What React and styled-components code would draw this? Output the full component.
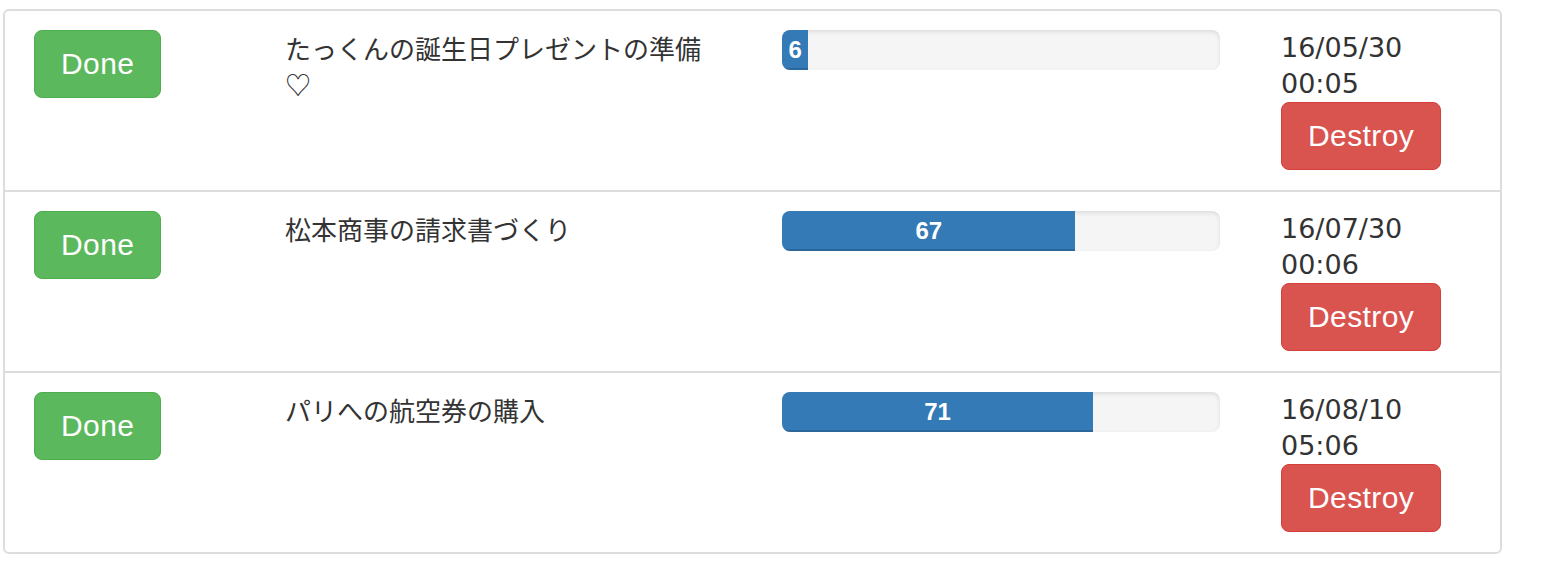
import React from "react";
import styled, { createGlobalStyle } from "styled-components";

const GlobalStyle = createGlobalStyle`
    body {
        margin:0;
        background:#fff;
        color:#333;
        font-family:"Liberation Sans", Arial, sans-serif;
    }
    * { box-sizing:border-box; }
`;

const Panel = styled.div`
    margin:9px 0 0 3px;
    width:1499px;
    border:2px solid #ddd;
    border-radius:6px;
`;

const Row = styled.div`
    display:grid;
    grid-template-columns: 251px 497px 499px 1fr;
    align-items:start;
    padding:19px 0 20px 29px;
    & + & {
        border-top:2px solid #ddd;
    }
`;

const Button = styled.button`
    display:inline-flex;
    align-items:center;
    justify-content:center;
    height:68px;
    padding:0 26px;
    border:1px solid ${p => p.$danger ? "#d43f3a" : "#4cae4c"};
    background:${p => p.$danger ? "#d9534f" : "#5cb85c"};
    color:#fff;
    border-radius:8px;
    font-family:"Liberation Sans", Arial, sans-serif;
    font-size:30px;
    letter-spacing:0.4px;
    cursor:pointer;
`;

const Title = styled.div`
    max-width:430px;
    font-family:"Noto Sans CJK JP", sans-serif;
    font-size:26px;
    line-height:36px;
    color:#333;
`;

const Progress = styled.div`
    width:438px;
    height:40px;
    background:#f5f5f5;
    border-radius:8px;
    overflow:hidden;
    box-shadow: inset 0 2px 4px rgba(0,0,0,0.1);
`;

const Bar = styled.div`
    height:100%;
    background:#337ab7;
    color:#fff;
    text-align:center;
    font-family:"Liberation Sans", Arial, sans-serif;
    font-weight:bold;
    font-size:24px;
    line-height:40px;
    box-shadow: inset 0 -2px 0 rgba(0,0,0,0.15);
`;

const Stamp = styled.div`
    font-family:"DejaVu Sans", Verdana, sans-serif;
    font-size:27px;
    line-height:36px;
    color:#333;
`;

const todos = [
    { title: "たっくんの誕生日プレゼントの準備♡", progress: 6, date: "16/05/30", time: "00:05" },
    { title: "松本商事の請求書づくり", progress: 67, date: "16/07/30", time: "00:06" },
    { title: "パリへの航空券の購入", progress: 71, date: "16/08/10", time: "05:06" },
];

const App = () => {
    return(
        <>
            <GlobalStyle />
            <Panel>
                {todos.map(t => (
                    <Row key={t.title}>
                        <div><Button>Done</Button></div>
                        <Title>{t.title}</Title>
                        <Progress>
                            <Bar style={{width: t.progress + "%"}}>{t.progress}</Bar>
                        </Progress>
                        <div>
                            <Stamp>{t.date}<br />{t.time}</Stamp>
                            <Button $danger>Destroy</Button>
                        </div>
                    </Row>
                ))}
            </Panel>
        </>
    )
}

export default App;
